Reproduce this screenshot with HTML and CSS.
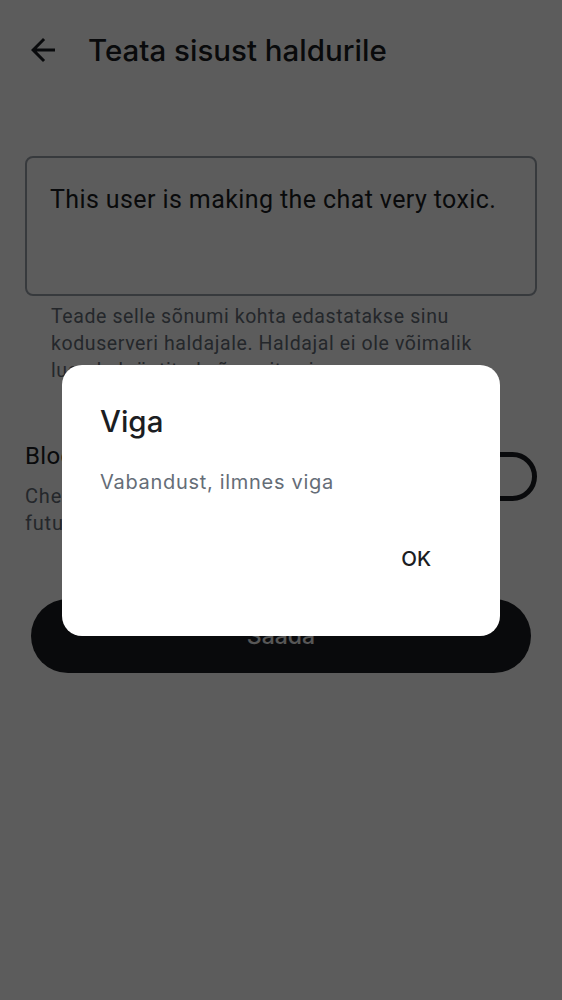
FILE: index.html
```html
<!DOCTYPE html>
<html lang="et">
<head>
<meta charset="utf-8">
<title>Teata sisust haldurile</title>
<link rel="stylesheet" href="styles.css">
</head>
<body>
<div class="page">
  <header class="topbar">
    <svg class="back" viewBox="0 0 24 24" width="36" height="36" aria-hidden="true">
      <path d="M20 11H7.83l5.59-5.59L12 4l-8 8 8 8 1.41-1.41L7.83 13H20v-2z" fill="#1b1d22"/>
    </svg>
    <h1 class="title">Teata sisust haldurile</h1>
  </header>

  <div class="field">This user is making the chat very toxic.</div>
  <p class="hint">Teade selle sõnumi kohta edastatakse sinu koduserveri haldajale. Haldajal ei ole võimalik lugeda krüptitud sõnumite sisu.</p>

  <div class="block-row">
    <div class="block-text">
      <div class="block-label">Block user</div>
      <div class="block-desc">Check if you want to hide all current and future messages from this user</div>
    </div>
    <div class="switch"><span class="thumb"></span></div>
  </div>

  <button class="send">Saada</button>
</div>

<div class="overlay">
  <div class="dialog">
    <h2 class="dialog-title">Viga</h2>
    <p class="dialog-body">Vabandust, ilmnes viga</p>
    <div class="dialog-actions">
      <button class="dialog-btn">OK</button>
    </div>
  </div>
</div>
</body>
</html>
```

FILE: styles.css
```css
* { box-sizing: border-box; }
html, body { margin: 0; padding: 0; background: #ffffff; }
body { font-family: Inter, "Noto Sans", sans-serif; color: #1b1d22; }

.page { width: 562px; min-height: 1000px; display: flex; flex-direction: column; }

.topbar { height: 100px; display: flex; align-items: center; padding-left: 25px; gap: 27px; }
.back { display: block; }
.title { margin: 0; font-size: 29.5px; font-weight: 500; line-height: 36px; letter-spacing: 0; }

.field {
  margin: 56px 25px 0;
  height: 140px;
  border: 2px solid #9aa1aa;
  border-radius: 8px;
  padding: 27px 23px;
  font-family: Roboto, sans-serif;
  font-size: 25px;
  line-height: 29px;
  letter-spacing: 0.4px;
  color: #1b1d22;
}

.hint {
  margin: 7px 50px 0 25px;
  padding-left: 26px;
  font-family: Roboto, sans-serif;
  font-size: 19.5px;
  line-height: 27px;
  letter-spacing: 0.6px;
  color: #656d77;
}

.block-row { display: flex; align-items: flex-start; margin: 57px 25px 0; gap: 20px; }
.block-text { flex: 1; }
.block-label { font-family: Roboto, sans-serif; font-size: 24px; line-height: 30px; letter-spacing: 0.3px; color: #1b1d22; }
.block-desc { font-family: Roboto, sans-serif; font-size: 20px; line-height: 27px; letter-spacing: 0.8px; color: #656d77; margin-top: 12px; }

.switch {
  margin-top: 11px;
  width: 78px; height: 49px;
  border: 5px solid #1b1d22;
  border-radius: 25px;
  position: relative;
  flex: none;
}
.thumb { position: absolute; left: 8px; top: 8px; width: 23px; height: 23px; border-radius: 50%; background: #1b1d22; }

.send {
  margin: 62px 31px 0;
  height: 74px;
  border: 0;
  border-radius: 37px;
  background: #1b1d22;
  color: #f0f0f0;
  font-family: Inter, sans-serif;
  font-size: 23px;
  font-weight: 500;
}

.overlay {
  position: fixed; inset: 0;
  background: rgba(0, 0, 0, 0.64);
  display: flex; align-items: center; justify-content: center;
}
.dialog {
  width: 438px; height: 271px;
  background: #ffffff;
  border-radius: 20px;
  padding: 38px 38px 0;
  display: flex; flex-direction: column;
}
.dialog-title { margin: 0; font-size: 29.5px; font-weight: 500; line-height: 36px; color: #1b1d22; }
.dialog-body { margin: 29px 0 0; font-size: 20px; line-height: 28px; letter-spacing: 0.7px; color: #656d77; }
.dialog-actions { display: flex; justify-content: flex-end; margin-top: 43px; margin-right: 8px; }
.dialog-btn {
  border: 0; background: none; padding: 8px 23px;
  font-family: Inter, sans-serif; font-size: 20.5px; line-height: 24px; font-weight: 500; color: #1b1d22;
}
```
